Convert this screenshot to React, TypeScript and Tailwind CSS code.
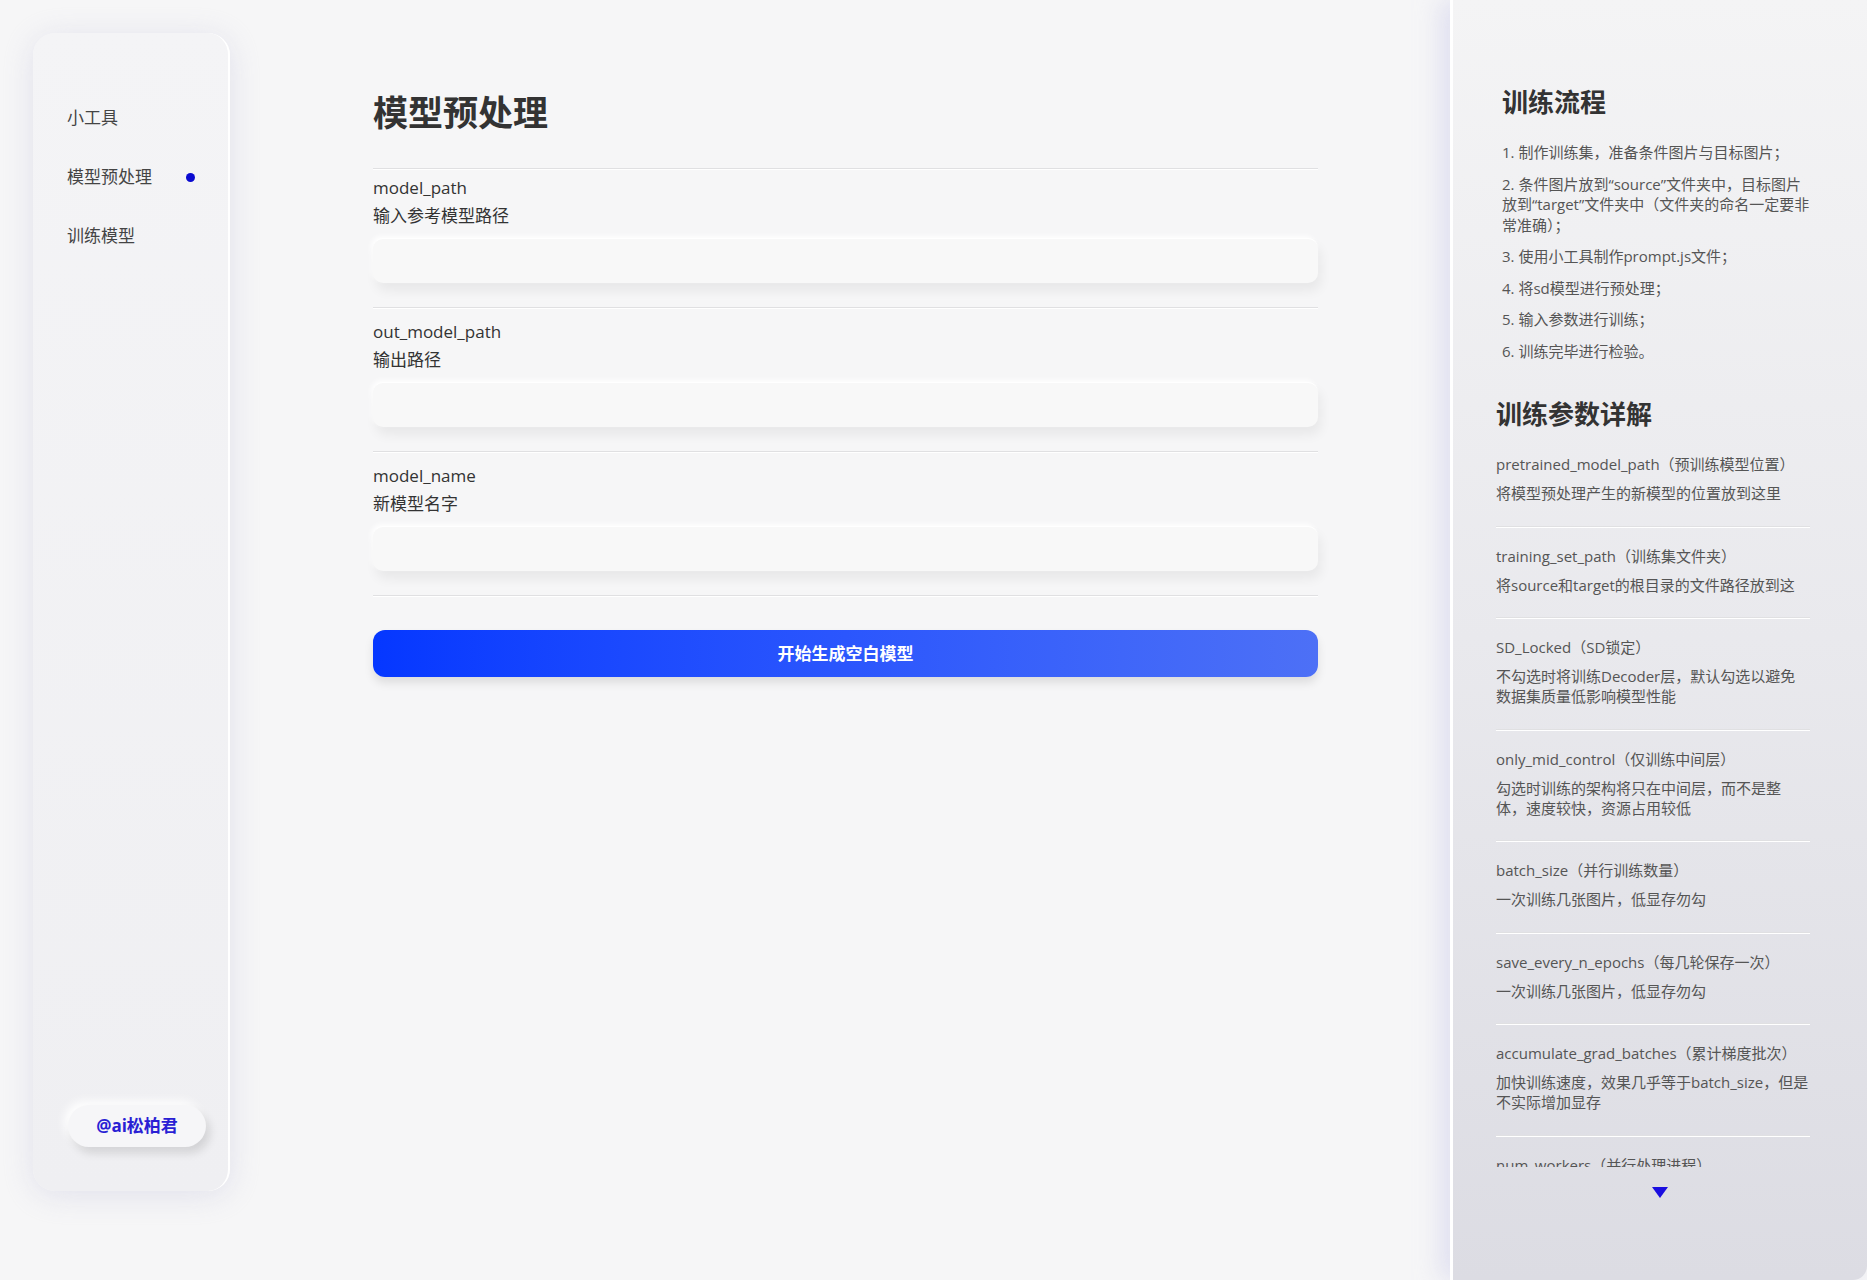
import React from 'react';

const navItems = [
  { label: '小工具', active: false },
  { label: '模型预处理', active: true },
  { label: '训练模型', active: false },
];

const fields = [
  { name: 'model_path', desc: '输入参考模型路径' },
  { name: 'out_model_path', desc: '输出路径' },
  { name: 'model_name', desc: '新模型名字' },
];

// wrapped lines are kept as in the design
const steps: string[][] = [
  ['1. 制作训练集，准备条件图片与目标图片；'],
  ['2. 条件图片放到“source”文件夹中，目标图片', '放到“target”文件夹中（文件夹的命名一定要非', '常准确）；'],
  ['3. 使用小工具制作prompt.js文件；'],
  ['4. 将sd模型进行预处理；'],
  ['5. 输入参数进行训练；'],
  ['6. 训练完毕进行检验。'],
];

const params: { title: string; desc: string[] }[] = [
  { title: 'pretrained_model_path（预训练模型位置）', desc: ['将模型预处理产生的新模型的位置放到这里'] },
  { title: 'training_set_path（训练集文件夹）', desc: ['将source和target的根目录的文件路径放到这'] },
  { title: 'SD_Locked（SD锁定）', desc: ['不勾选时将训练Decoder层，默认勾选以避免', '数据集质量低影响模型性能'] },
  { title: 'only_mid_control（仅训练中间层）', desc: ['勾选时训练的架构将只在中间层，而不是整', '体，速度较快，资源占用较低'] },
  { title: 'batch_size（并行训练数量）', desc: ['一次训练几张图片，低显存勿勾'] },
  { title: 'save_every_n_epochs（每几轮保存一次）', desc: ['一次训练几张图片，低显存勿勾'] },
  { title: 'accumulate_grad_batches（累计梯度批次）', desc: ['加快训练速度，效果几乎等于batch_size，但是', '不实际增加显存'] },
  { title: 'num_workers（并行处理进程）', desc: ['数据加载时使用的进程数量'] },
];

const Divider = () => <div className="h-px bg-[#e0e0e2] shadow-[0_1px_0_#ffffff]" />;

export default function App() {
  return (
    <div className="flex h-[1280px] w-full overflow-hidden bg-[#f6f6f7] font-['Open_Sans','Noto_Sans_CJK_SC',sans-serif]">
      {/* Sidebar */}
      <aside className="ml-[33px] mt-[33px] flex h-[1158px] w-[197px] shrink-0 flex-col justify-between rounded-[22px] border-r-2 border-white bg-linear-to-b from-[#f4f4f6] to-[#efeff2] shadow-[0_4px_30px_rgba(200,200,222,0.45)]">
        <nav className="flex flex-col gap-[35px] pl-[34px] pr-[33px] pt-[73px]">
          {navItems.map((item) => (
            <div key={item.label} className="flex items-center justify-between text-[17px] leading-[24px] text-[#444]">
              <span>{item.label}</span>
              {item.active && <span className="h-[9px] w-[9px] rounded-full bg-[#0a0ad0]" />}
            </div>
          ))}
        </nav>
        <div className="mb-[44px] ml-[35px] flex h-[42px] w-[138px] items-center justify-center rounded-full bg-[#f6f6f8] text-[17px] font-bold text-[#2a1fd4] shadow-[4px_6px_10px_rgba(0,0,0,0.12),-4px_-4px_10px_rgba(255,255,255,0.95)]">
          @ai松柏君
        </div>
      </aside>

      {/* Main form */}
      <main className="ml-[143px] w-[945px] shrink-0 pt-[91px]">
        <h1 className="text-[35px] font-bold leading-[44px] text-[#333]">模型预处理</h1>
        <div className="mt-[33px]">
          <Divider />
        </div>
        {fields.map((f, i) => (
          <div key={f.name}>
            <div className={i === 0 ? 'pt-[7px]' : 'pt-[12px]'}>
              <div className="text-[17px] leading-[24px] text-[#333]">{f.name}</div>
              <div className="mt-[4px] text-[17px] leading-[24px] text-[#333]">{f.desc}</div>
              <input
                type="text"
                className="mb-[24px] mt-[10px] block h-[45px] w-full rounded-[10px] border-t border-white bg-[#f8f8f8] px-4 text-[16px] outline-none shadow-[3px_8px_12px_rgba(0,0,0,0.06),-2px_-2px_5px_rgba(255,255,255,0.9)]"
              />
            </div>
            <Divider />
          </div>
        ))}
        <button className="mt-[34px] flex h-[47px] w-full items-center justify-center rounded-[12px] bg-linear-to-r from-[#0537ff] via-[#2b56fd] to-[#4d70f6] text-[17px] font-bold text-white shadow-[0_6px_10px_rgba(0,0,0,0.1)]">
          开始生成空白模型
        </button>
      </main>

      {/* Right help panel */}
      <aside className="ml-auto flex h-full w-[417px] shrink-0 flex-col rounded-br-[14px] border-l-[3px] border-white bg-linear-to-b from-[#f4f4f5] via-[#e9e9ed] to-[#dcdce3] shadow-[-10px_0_24px_rgba(205,205,235,0.55)]">
        <div className="h-[1167px] overflow-hidden pl-[43px] pt-[85px]">
          <div className="pl-[6px]">
            <h2 className="text-[26px] font-bold leading-[34px] text-[#333]">训练流程</h2>
            <ol className="mt-[23px] flex flex-col gap-[11px] text-[15px] leading-[20.5px] text-[#555]">
              {steps.map((lines, i) => (
                <li key={i}>
                  {lines.map((l) => (
                    <span key={l} className="block whitespace-nowrap">{l}</span>
                  ))}
                </li>
              ))}
            </ol>
          </div>

          <h2 className="mb-[4px] mt-[36px] text-[26px] font-bold leading-[34px] text-[#333]">训练参数详解</h2>
          <div className="w-[314px]">
            {params.map((p) => (
              <div key={p.title}>
                <div className="pb-[22.5px] pt-[18px] text-[15px] text-[#555]">
                  <div className="whitespace-nowrap leading-[22px]">{p.title}</div>
                  <div className="mt-[8px] leading-[20px]">
                    {p.desc.map((l) => (
                      <span key={l} className="block whitespace-nowrap">{l}</span>
                    ))}
                  </div>
                </div>
                <Divider />
              </div>
            ))}
          </div>
        </div>
        <div className="mt-[20px] flex justify-center">
          <svg width="16" height="11" viewBox="0 0 16 11">
            <polygon points="0,0 16,0 8,11" fill="#1a0ee0" />
          </svg>
        </div>
      </aside>
    </div>
  );
}
